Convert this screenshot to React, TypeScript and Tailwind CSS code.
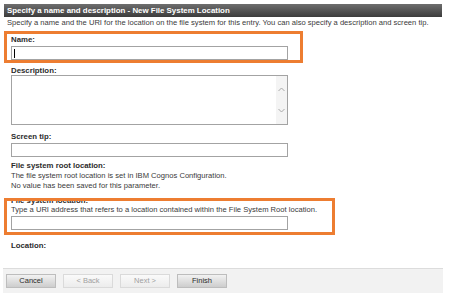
import React from 'react';

const font = { fontFamily: '"Liberation Sans", Arial, sans-serif' };

const Label: React.FC<{ children: React.ReactNode; className?: string }> = ({ children, className }) => (
  <div className={`text-[7.8px] font-bold text-[#2b2b2b] ${className ?? ''}`}>{children}</div>
);

const TextBox: React.FC<{ className?: string; caret?: boolean }> = ({ className, caret }) => (
  <div className={`relative w-[277px] h-[14px] border border-[#a3a3a3] bg-white ${className ?? ''}`}>
    {caret && <div className="absolute left-[2px] top-[2px] w-px h-[9px] bg-black" />}
  </div>
);

const WizButton: React.FC<{ label: string; disabled?: boolean }> = ({ label, disabled }) => (
  <button
    className={
      disabled
        ? 'w-[50px] h-[14px] border border-[#dadada] bg-gradient-to-b from-[#fafafa] to-[#ececec] text-[7.5px] text-[#a0a0a0] leading-none'
        : 'w-[50px] h-[14px] border border-[#bdbdbd] bg-gradient-to-b from-[#f2f2f2] to-[#cdcdcd] text-[7.5px] text-[#2a2a2a] leading-none'
    }
  >
    {label}
  </button>
);

export default function App() {
  return (
    <div className="relative w-[450px] h-[293px] bg-white overflow-hidden pt-[4px] pl-[4px]" style={font}>
      <div className="w-[438px] h-[13px] bg-gradient-to-b from-[#6e6e6e] to-[#3c3c3c] pl-[3px] text-[7.9px] font-bold text-white leading-[13px]">
        Specify a name and description - New File System Location
      </div>
      <div className="mt-[1px] pl-[3px] h-[10px] text-[7.6px] leading-[10px] text-[#3a3a3a] whitespace-nowrap">
        Specify a name and the URI for the location on the file system for this entry. You can also specify a description and screen tip.
      </div>

      <div className="pl-[7px]">
        <Label className="mt-[7px] leading-[10px]">Name:</Label>
        <TextBox className="mt-[1px]" caret />

        <Label className="mt-[7px] leading-[8px]">Description:</Label>
        <div className="relative w-[277px] h-[50px] border border-[#a3a3a3] bg-white">
          <div className="absolute right-0 top-0 bottom-0 w-[11px] bg-[#f4f4f4] flex flex-col items-center justify-between py-[11px]">
            <svg width="7" height="5" viewBox="0 0 7 5">
              <path d="M0.5 4L3.5 1L6.5 4" fill="none" stroke="#a8a8a8" strokeWidth="1" />
            </svg>
            <svg width="7" height="5" viewBox="0 0 7 5">
              <path d="M0.5 1L3.5 4L6.5 1" fill="none" stroke="#a8a8a8" strokeWidth="1" />
            </svg>
          </div>
        </div>

        <Label className="mt-[8px] leading-[8px]">Screen tip:</Label>
        <TextBox className="mt-[2px]" />

        <div className="mt-[4px] text-[7.6px] leading-[10px] text-[#3a3a3a]">
          <div className="font-bold text-[7.8px] text-[#2b2b2b]">File system root location:</div>
          <div>The file system root location is set in IBM Cognos Configuration.</div>
          <div>No value has been saved for this parameter.</div>
        </div>

        <Label className="mt-[5px] leading-[9px]">File system location:</Label>
        <div className="text-[7.6px] leading-[9px] text-[#3a3a3a] whitespace-nowrap">
          Type a URI address that refers to a location contained within the File System Root location.
        </div>
        <TextBox className="mt-[2px]" />

        <Label className="mt-[11px] leading-[10px]">Location:</Label>
      </div>

      <div className="mt-[17px] -ml-[1px] w-[440px] h-[25px] border-t border-[#dcdcdc] bg-[#f2f2f2] pl-[3px] pt-[5px] flex gap-[7px]">
        <WizButton label="Cancel" />
        <WizButton label="< Back" disabled />
        <WizButton label="Next >" disabled />
        <WizButton label="Finish" />
      </div>

      <div className="absolute left-[4px] top-[31px] w-[299px] h-[32px] border-[3px] border-[#ed7d31]" />
      <div className="absolute left-[4px] top-[198px] w-[331px] h-[37px] border-[3px] border-[#ed7d31]" />
    </div>
  );
}
